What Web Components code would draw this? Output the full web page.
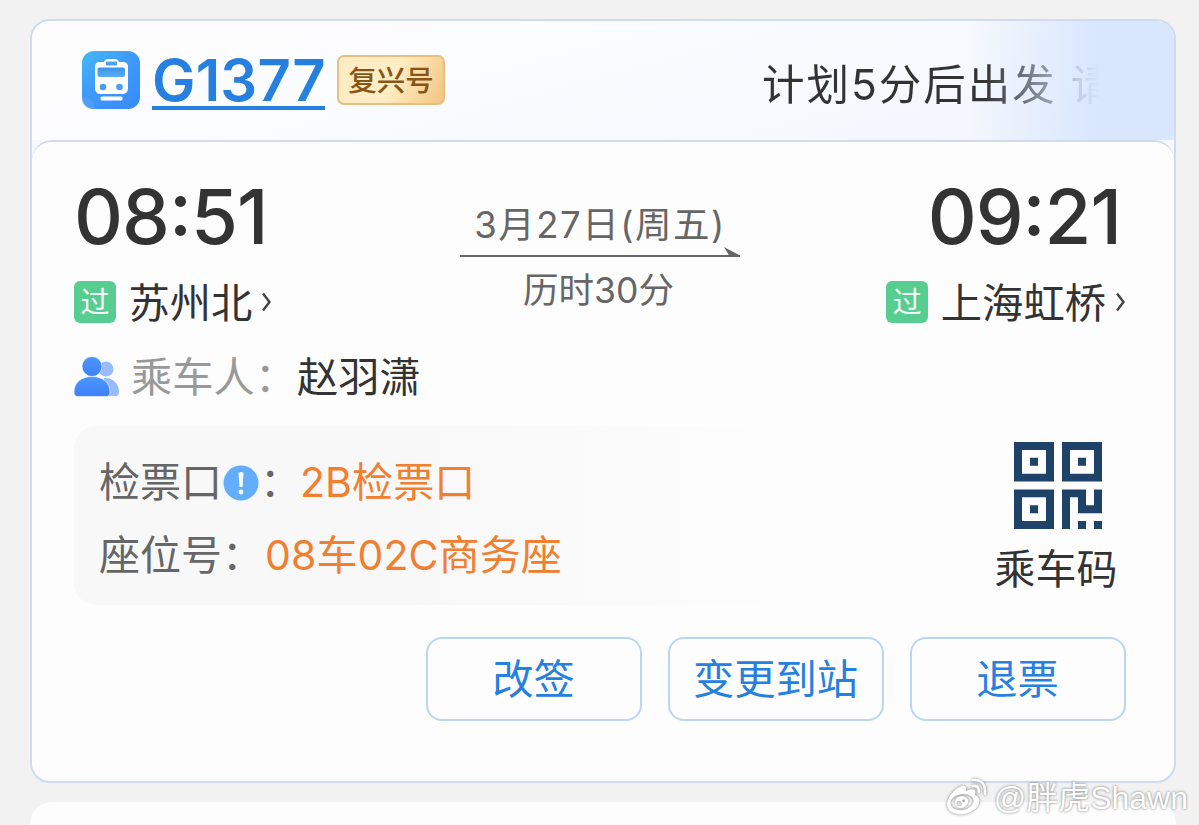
<!DOCTYPE html>
<html lang="zh-CN">
<head>
<meta charset="UTF-8">
<title>车票</title>
<style>
  html, body { height: 100%; }
  body {
    margin: 0;
    overflow: hidden;
    background: #f2f2f2;
    color: #333;
    font-family: Inter, "Noto Sans CJK SC", sans-serif;
  }
</style>
</head>
<body>
<ticket-page>
  <ticket-card>
    <train-header slot="header" code="G1377" tag="复兴号">计划5分后出发 请</train-header>
    <trip-info date="3月27日(周五)" duration="历时30分">
      <station-stop slot="from" time="08:51" name="苏州北"></station-stop>
      <station-stop slot="to" class="end" time="09:21" name="上海虹桥"></station-stop>
    </trip-info>
    <passenger-row label="乘车人：">赵羽潇</passenger-row>
    <seat-panel></seat-panel>
    <action-bar>
      <action-button>改签</action-button>
      <action-button>变更到站</action-button>
      <action-button>退票</action-button>
    </action-bar>
  </ticket-card>
  <weibo-mark slot="mark">@胖虎Shawn</weibo-mark>
</ticket-page>

<script>
// Helper para registrar un componente con su template
function define(name, html) {
  const template = document.createElement("template");
  template.innerHTML = html;
  customElements.define(name, class extends HTMLElement {
    constructor() {
      super()
      this.attachShadow({ mode: "open" })
      this.shadowRoot.appendChild(template.content.cloneNode(true))
      // rellenar los textos a partir de los atributos
      this.shadowRoot.querySelectorAll("[data-attr]").forEach((el) => {
        el.textContent = this.getAttribute(el.dataset.attr)
      })
    }
  })
}

define("ticket-page", `
<style>
:host{
    display: flex;
    flex-direction: column;
    position: relative;
    height: 825px;
    box-sizing: border-box;
    padding: 19px 23px 0 30px;
    gap: 19px;
    overflow: hidden;
}
.next{
    flex: none;
    height: 120px;
    background: #fdfdfd;
    border-radius: 22px;
}
::slotted(weibo-mark){
    position: absolute;
    right: 11px;
    bottom: 7px;
}
</style>
<slot></slot>
<div class="next"></div>
<slot name="mark"></slot>
`)

define("ticket-card", `
<style>
:host{
    display: block;
    flex: none;
    height: 764px;
    box-sizing: border-box;
    border: 2px solid #d0dcee;
    border-radius: 20px;
    background: #f5f8fd;
    overflow: hidden;
}
.body{
    height: 641px;
    box-sizing: border-box;
    border-top: 2px solid #d0dcee;
    border-radius: 20px;
    background: #fdfdfd;
    padding: 36px 48px 0 42px;
}
</style>
<slot name="header"></slot>
<div class="body"><slot></slot></div>
`)

define("train-header", `
<style>
:host{
    display: flex;
    align-items: center;
    height: 119px;
    box-sizing: border-box;
    padding: 0 0 2px 50px;
    background: linear-gradient(90deg, rgba(217,231,254,0) 82%, #d9e7fe 93%),
      linear-gradient(165deg, #fdfdfe 20%, #f8fbfe 50%, #f3f6fd 90%);
}
svg{
    flex: none;
    width: 58px;
    height: 58px;
}
.code{
    margin: 2px 0 0 12px;
    width: 173px;
    height: 58px;
    box-sizing: border-box;
    border-bottom: 4px solid #2680e0;
    color: #2680e0;
    font-size: 58px;
    font-weight: 560;
    line-height: 57px;
    letter-spacing: 0.2px;
    white-space: nowrap;
}
.tag{
    margin-left: 12px;
    width: 108px;
    height: 50px;
    box-sizing: border-box;
    border: 2px solid #e8bf80;
    border-radius: 7px;
    background: linear-gradient(115deg, #fcebc4 0%, #ffeec4 50%, #f3c582 100%);
    color: #875617;
    font-size: 28.5px;
    font-weight: 500;
    line-height: 48px;
    text-align: center;
}
.notice{
    margin-left: auto;
    margin-right: 70px;
    width: 342px;
    overflow: hidden;
    font-size: 42.5px;
    line-height: 60px;
    letter-spacing: 2px;
    white-space: nowrap;
    padding-top: 11px;
    color: transparent;
    background: linear-gradient(90deg, #333 65%, #9da8b8 86%, #c3cfe2 93%, #d9e7fe 99%);
    -webkit-background-clip: text;
    background-clip: text;
}
</style>
<svg viewBox="0 0 58 58">
  <defs>
    <linearGradient id="bg" x1="0" y1="0" x2=".8" y2="1">
      <stop offset="0" stop-color="#43baf5"/>
      <stop offset=".45" stop-color="#409bf9"/>
      <stop offset="1" stop-color="#398cfb"/>
    </linearGradient>
    <linearGradient id="glass" x1="0" y1="0" x2="0" y2="1">
      <stop offset="0" stop-color="#3b93e8"/>
      <stop offset="1" stop-color="#5aaefb"/>
    </linearGradient>
  </defs>
  <rect width="58" height="58" rx="12" fill="url(#bg)"/>
  <path d="M0 46Q10 46 14 58H12Q0 58 0 46Z" fill="#5ba4ff" opacity=".6"/>
  <path d="M17 11h5q1-3 4-3h7q3 0 4 3h4q5 0 5 5v21q0 6-6 6H19q-6 0-6-6V16q0-5 4-5Z" fill="#fff"/>
  <rect x="24" y="10.500" width="11" height="4" rx="1" fill="#4ca0f7"/>
  <rect x="15.500" y="16.500" width="27.500" height="9.500" rx="2" fill="url(#glass)"/>
  <circle cx="21" cy="36" r="3.300" fill="#4a9ff5"/>
  <circle cx="37.500" cy="36" r="3.300" fill="#4a9ff5"/>
  <rect x="18.500" y="45.500" width="22" height="4" rx="1.500" fill="#fff"/>
</svg>
<div class="code" data-attr="code"></div>
<div class="tag" data-attr="tag"></div>
<div class="notice"><slot></slot></div>
`)

define("trip-info", `
<style>
:host{
    display: flex;
    justify-content: space-between;
    height: 148px;
}
.middle{
    width: 280px;
    margin: 23px 0 0 0;
    display: flex;
    flex-direction: column;
    color: #666;
    font-size: 35.5px;
    text-align: center;
    white-space: nowrap;
}
.date{
    font-size: 36.5px;
    line-height: 48px;
    height: 46px;
    letter-spacing: 1.5px;
}
svg{
    display: block;
    width: 280px;
    height: 12px;
}
.duration{
    line-height: 48px;
    margin-top: 8px;
    padding-right: 3px;
}
</style>
<slot name="from"></slot>
<div class="middle">
  <div class="date" data-attr="date"></div>
  <svg viewBox="0 0 280 12"><path d="M0 8h280v2H0Z" fill="#666"/><path d="M264 0L280 8.500V10H270Z" fill="#666"/></svg>
  <div class="duration" data-attr="duration"></div>
</div>
<slot name="to"></slot>
`)

define("station-stop", `
<style>
:host{
    display: flex;
    flex-direction: column;
    width: 241px;
    margin-right: -1px;
}
:host(.end){
    align-items: flex-end;
}
.time{
    font-size: 76px;
    font-weight: 450;
    line-height: 76px;
    letter-spacing: -1px;
    font-feature-settings: "case";
}
:host(.end) .time{
    margin-right: 6px;
}
.place{
    display: flex;
    align-items: center;
    height: 60px;
    margin-top: 18px;
    font-size: 41.3px;
    line-height: 60px;
    white-space: nowrap;
}
:host(.end) .place{
    margin-right: 2px;
}
.name{
    padding-top: 2px;
}
.pass{
    width: 42px;
    height: 42px;
    margin-right: 12.500px;
    border-radius: 6px;
    background: #58cd91;
    color: #f2fff8;
    font-size: 29px;
    line-height: 44px;
    text-align: center;
}
svg{
    width: 10px;
    height: 20px;
    margin-left: 9px;
}
</style>
<div class="time" data-attr="time"></div>
<div class="place">
  <span class="pass">过</span>
  <span class="name" data-attr="name"></span>
  <svg viewBox="0 0 10 20"><path d="M2 1.500L8.500 10L2 18.500" fill="none" stroke="#444" stroke-width="2.400"/></svg>
</div>
`)

define("passenger-row", `
<style>
:host{
    display: flex;
    align-items: center;
    height: 60px;
    margin-top: 21px;
    font-size: 41.3px;
    line-height: 58px;
    white-space: nowrap;
}
svg{
    width: 46px;
    height: 40px;
    margin-right: 11px;
}
.label{
    color: #999;
    width: 166px;
}
</style>
<svg viewBox="0 0 46 40">
  <defs>
    <linearGradient id="p" x1="0" y1="0" x2="0" y2="1">
      <stop offset="0" stop-color="#4b98ff"/>
      <stop offset="1" stop-color="#3f7ff7"/>
    </linearGradient>
  </defs>
  <circle cx="32" cy="12" r="7.500" fill="#97bbfc"/>
  <path d="M30 21C39 20 45 27 45 35Q45 39 42 39H30Z" fill="#97bbfc"/>
  <circle cx="18" cy="9.500" r="10" fill="url(#p)" stroke="#fdfdfd" stroke-width=".6"/>
  <path d="M0 35C0 25 8 19.500 18 19.500S36 25 36 35Q36 39.500 32 39.500H4Q0 39.500 0 35Z" fill="url(#p)" stroke="#fdfdfd" stroke-width=".6"/>
</svg>
<span class="label" data-attr="label"></span>
<slot></slot>
`)

define("seat-panel", `
<style>
:host{
    display: flex;
    justify-content: space-between;
    height: 179px;
    margin-top: 19px;
}
.info{
    width: 760px;
    box-sizing: border-box;
    padding: 20px 0 0 25px;
    border-radius: 22px;
    background: linear-gradient(90deg, #f8f8f8 0%, #f8f8f8 45%, #fdfdfd 96%);
    font-size: 41px;
    white-space: nowrap;
}
.row{
    display: flex;
    align-items: center;
    height: 73px;
    line-height: 73px;
    color: #666;
}
.value{
    color: #f0802f;
    letter-spacing: 0.1px;
}
svg.tip{
    width: 36px;
    height: 36px;
    margin: 0 0 0 1px;
}
.colon{
    width: 41px;
    text-indent: 1px;
}
.qr{
    display: flex;
    flex-direction: column;
    align-items: center;
    width: 124px;
    margin-right: 8px;
    padding-top: 16px;
    font-size: 41px;
    line-height: 60px;
    white-space: nowrap;
}
.qr svg{
    flex: none;
    width: 88px;
    height: 87px;
    margin: 0 0 10px 3px;
}
</style>
<div class="info">
  <div class="row">
    <span>检票口</span>
    <svg class="tip" viewBox="0 0 36 36">
      <circle cx="18" cy="18" r="17.500" fill="#63adff"/>
      <path d="M15.500 8Q18 6 20.500 8L19.500 22H16.500Z" fill="#fff"/>
      <circle cx="18" cy="27" r="2.400" fill="#fff"/>
    </svg>
    <span class="colon">：</span>
    <span class="value">2B检票口</span>
  </div>
  <div class="row">
    <span style="width:166px">座位号：</span>
    <span class="value">08车02C商务座</span>
  </div>
</div>
<div class="qr">
  <svg viewBox="0 0 88 88" preserveAspectRatio="none" fill="#1f4268">
    <path fill-rule="evenodd" d="M0 0H40V40H0ZM8 8V32H32V8ZM16 16H24V24H16Z"/>
    <path fill-rule="evenodd" d="M48 0H88V40H48ZM56 8V32H80V8ZM64 16H72V24H64Z"/>
    <path fill-rule="evenodd" d="M0 48H40V88H0ZM8 56V80H32V56ZM16 64H24V72H16Z"/>
    <path d="M48 48H72V64H80V48H88V72H64V56H56V88H48ZM64 80H72V88H64ZM80 80H88V88H80Z"/>
  </svg>
  <span>乘车码</span>
</div>
`)

define("action-bar", `
<style>
:host{
    display: flex;
    justify-content: flex-end;
    gap: 26px;
    margin-top: 32px;
}
</style>
<slot></slot>
`)

define("action-button", `
<style>
button{
    display: block;
    width: 216px;
    height: 84px;
    padding: 0 1px 6px 0;
    border: 2px solid #bad6f3;
    border-radius: 16px;
    background: #fdfdfd;
    color: #2680e0;
    font: inherit;
    font-size: 41.3px;
    white-space: nowrap;
}
button:hover{
    cursor: pointer;
}
</style>
<button><slot></slot></button>
`)

define("weibo-mark", `
<style>
:host{
    display: flex;
    align-items: center;
    gap: 5px;
    color: #fff;
    font-family: "Liberation Sans", "Noto Sans CJK SC", sans-serif;
    font-size: 32px;
    line-height: 40px;
    white-space: nowrap;
    text-shadow: 0 0 3px rgba(0,0,0,.4), 0 0 2px rgba(0,0,0,.2);
}
svg{
    width: 44px;
    height: 40px;
    filter: drop-shadow(0 0 1.500px rgba(0,0,0,.5));
}
</style>
<svg viewBox="0 0 44 40">
  <path fill="#fff" fill-rule="evenodd" d="M17 8C20 7 22 9 21 13C27 10 32 11 30 17C35 19 36 24 32 29C26 37 10 39 4 32C-2 25 7 11 17 8ZM17 16C9 17 4 22 6 27C8 33 19 34 25 29C33 22 26 15 17 16Z"/>
  <path fill="#fff" fill-rule="evenodd" d="M17 18C11 18 8 24 11 28C14 32 21 30 23 25C24 21 21 18 17 18ZM14 23A2.600 2.600 0 1 0 14 28.200A2.600 2.600 0 1 0 14 23ZM18.500 21.500A1.200 1.200 0 1 0 18.500 24A1.200 1.200 0 1 0 18.500 21.500Z"/>
  <path fill="none" stroke="#fff" stroke-width="2.600" stroke-linecap="round" d="M28 8Q34 7 34 14M28 2Q41 1 40 16"/>
</svg>
<slot></slot>
`)
</script>
</body>
</html>
